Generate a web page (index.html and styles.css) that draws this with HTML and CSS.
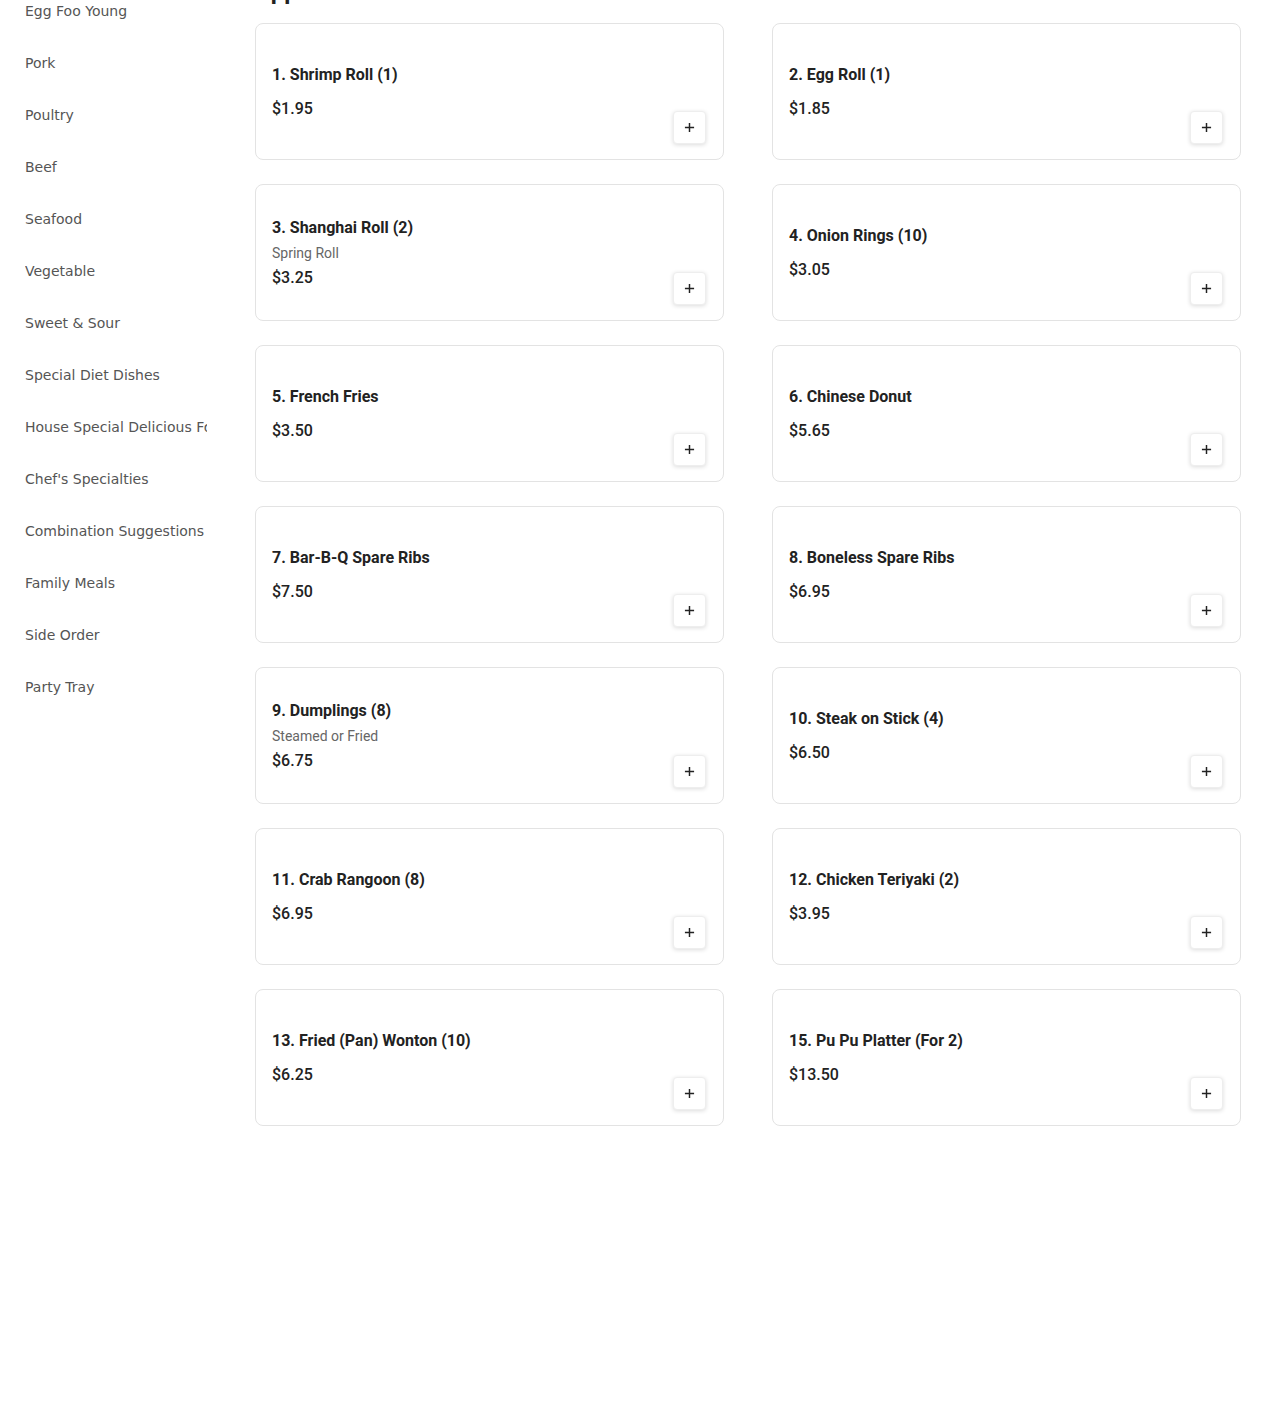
FILE: index.html
```html
<!DOCTYPE html>
<html lang="en">
<head>
<meta charset="utf-8">
<title>Menu</title>
<link rel="stylesheet" href="styles.css">
</head>
<body>
<div class="page">
  <nav class="sidebar">
    <ul class="cat-list">
      <li class="cat">Egg Foo Young</li>
      <li class="cat">Pork</li>
      <li class="cat">Poultry</li>
      <li class="cat">Beef</li>
      <li class="cat">Seafood</li>
      <li class="cat">Vegetable</li>
      <li class="cat">Sweet &amp; Sour</li>
      <li class="cat">Special Diet Dishes</li>
      <li class="cat">House Special Delicious Food</li>
      <li class="cat">Chef's Specialties</li>
      <li class="cat">Combination Suggestions</li>
      <li class="cat">Family Meals</li>
      <li class="cat">Side Order</li>
      <li class="cat">Party Tray</li>
    </ul>
  </nav>
  <main class="main">
    <h2 class="section-title">Appetizers</h2>
    <div class="grid">
      <div class="card"><div class="info"><div class="name">1. Shrimp Roll (1)</div><div class="price">$1.95</div></div><button class="add" aria-label="Add"><svg viewBox="0 0 12 12" width="11" height="11"><path d="M6 1v10M1 6h10" stroke="#222" stroke-width="1.6" fill="none"/></svg></button></div>
      <div class="card"><div class="info"><div class="name">2. Egg Roll (1)</div><div class="price">$1.85</div></div><button class="add" aria-label="Add"><svg viewBox="0 0 12 12" width="11" height="11"><path d="M6 1v10M1 6h10" stroke="#222" stroke-width="1.6" fill="none"/></svg></button></div>
      <div class="card"><div class="info"><div class="name">3. Shanghai Roll (2)</div><div class="desc">Spring Roll</div><div class="price">$3.25</div></div><button class="add" aria-label="Add"><svg viewBox="0 0 12 12" width="11" height="11"><path d="M6 1v10M1 6h10" stroke="#222" stroke-width="1.6" fill="none"/></svg></button></div>
      <div class="card"><div class="info"><div class="name">4. Onion Rings (10)</div><div class="price">$3.05</div></div><button class="add" aria-label="Add"><svg viewBox="0 0 12 12" width="11" height="11"><path d="M6 1v10M1 6h10" stroke="#222" stroke-width="1.6" fill="none"/></svg></button></div>
      <div class="card"><div class="info"><div class="name">5. French Fries</div><div class="price">$3.50</div></div><button class="add" aria-label="Add"><svg viewBox="0 0 12 12" width="11" height="11"><path d="M6 1v10M1 6h10" stroke="#222" stroke-width="1.6" fill="none"/></svg></button></div>
      <div class="card"><div class="info"><div class="name">6. Chinese Donut</div><div class="price">$5.65</div></div><button class="add" aria-label="Add"><svg viewBox="0 0 12 12" width="11" height="11"><path d="M6 1v10M1 6h10" stroke="#222" stroke-width="1.6" fill="none"/></svg></button></div>
      <div class="card"><div class="info"><div class="name">7. Bar-B-Q Spare Ribs</div><div class="price">$7.50</div></div><button class="add" aria-label="Add"><svg viewBox="0 0 12 12" width="11" height="11"><path d="M6 1v10M1 6h10" stroke="#222" stroke-width="1.6" fill="none"/></svg></button></div>
      <div class="card"><div class="info"><div class="name">8. Boneless Spare Ribs</div><div class="price">$6.95</div></div><button class="add" aria-label="Add"><svg viewBox="0 0 12 12" width="11" height="11"><path d="M6 1v10M1 6h10" stroke="#222" stroke-width="1.6" fill="none"/></svg></button></div>
      <div class="card"><div class="info"><div class="name">9. Dumplings (8)</div><div class="desc">Steamed or Fried</div><div class="price">$6.75</div></div><button class="add" aria-label="Add"><svg viewBox="0 0 12 12" width="11" height="11"><path d="M6 1v10M1 6h10" stroke="#222" stroke-width="1.6" fill="none"/></svg></button></div>
      <div class="card"><div class="info"><div class="name">10. Steak on Stick (4)</div><div class="price">$6.50</div></div><button class="add" aria-label="Add"><svg viewBox="0 0 12 12" width="11" height="11"><path d="M6 1v10M1 6h10" stroke="#222" stroke-width="1.6" fill="none"/></svg></button></div>
      <div class="card"><div class="info"><div class="name">11. Crab Rangoon (8)</div><div class="price">$6.95</div></div><button class="add" aria-label="Add"><svg viewBox="0 0 12 12" width="11" height="11"><path d="M6 1v10M1 6h10" stroke="#222" stroke-width="1.6" fill="none"/></svg></button></div>
      <div class="card"><div class="info"><div class="name">12. Chicken Teriyaki (2)</div><div class="price">$3.95</div></div><button class="add" aria-label="Add"><svg viewBox="0 0 12 12" width="11" height="11"><path d="M6 1v10M1 6h10" stroke="#222" stroke-width="1.6" fill="none"/></svg></button></div>
      <div class="card"><div class="info"><div class="name">13. Fried (Pan) Wonton (10)</div><div class="price">$6.25</div></div><button class="add" aria-label="Add"><svg viewBox="0 0 12 12" width="11" height="11"><path d="M6 1v10M1 6h10" stroke="#222" stroke-width="1.6" fill="none"/></svg></button></div>
      <div class="card"><div class="info"><div class="name">15. Pu Pu Platter (For 2)</div><div class="price">$13.50</div></div><button class="add" aria-label="Add"><svg viewBox="0 0 12 12" width="11" height="11"><path d="M6 1v10M1 6h10" stroke="#222" stroke-width="1.6" fill="none"/></svg></button></div>
    </div>
  </main>
</div>
</body>
</html>
```
FILE: styles.css
```css
* { box-sizing: border-box; }
html, body { margin: 0; padding: 0; background: #fff; }
body { overflow: hidden; }

.page {
  display: flex;
  align-items: flex-start;
  margin-top: -25px;
}

.sidebar {
  width: 232px;
  flex: 0 0 232px;
  padding: 10px 25px 0 25px;
}
.cat-list { list-style: none; margin: 0; padding: 0; width: 182px; overflow: hidden; }
.cat {
  font-family: "DejaVu Sans", sans-serif;
  font-size: 14px;
  line-height: 20px;
  padding: 16px 0;
  color: #555;
  white-space: nowrap;
  overflow: hidden;
}

.main {
  flex: 1;
  padding: 0 29px 0 23px;
}
.section-title {
  font-family: Roboto, "Liberation Sans", sans-serif;
  font-weight: 700;
  font-size: 24px;
  line-height: 32px;
  margin: 0 0 16px 0;
  color: #222;
}
.grid {
  display: grid;
  grid-template-columns: 1fr 1fr;
  column-gap: 48px;
  row-gap: 24px;
}
.card {
  height: 137px;
  border: 1px solid #e3e3e3;
  border-radius: 8px;
  padding: 16px;
  display: flex;
  align-items: center;
  justify-content: space-between;
  font-family: Roboto, "Liberation Sans", sans-serif;
  color: #222;
}
.info { display: flex; flex-direction: column; padding-top: 1px; }
.name { font-size: 16px; line-height: 24px; font-weight: 700; }
.desc { font-size: 14px; line-height: 20px; color: #666; margin-top: 3px; }
.price { font-size: 16px; line-height: 24px; font-weight: 500; margin-top: 10px; }
.desc + .price { margin-top: 3px; }

.add {
  align-self: flex-end;
  width: 33px;
  height: 33px;
  margin: 0 1px -1px 0;
  padding: 0;
  border: 1px solid #eee;
  border-radius: 4px;
  background: #fff;
  box-shadow: 0 1px 4px rgba(0,0,0,0.14);
  display: flex;
  align-items: center;
  justify-content: center;
  cursor: pointer;
}
.add svg { display: block; }
```
